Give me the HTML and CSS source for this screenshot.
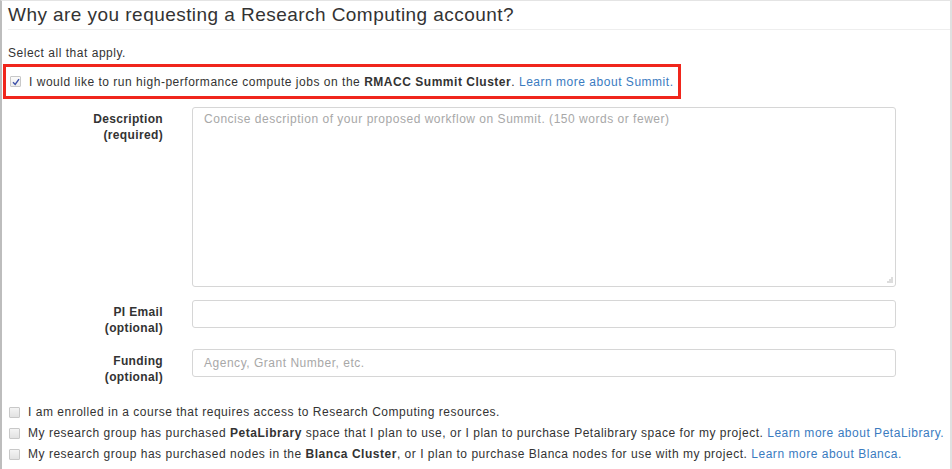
FILE: index.html
```html
<!DOCTYPE html>
<html>
<head>
<meta charset="utf-8">
<link rel="stylesheet" href="styles.css">
</head>
<body>
<div class="panel">
  <h2 class="heading">Why are you requesting a Research Computing account?</h2>
  <p class="hint">Select all that apply.</p>
  <div class="highlight">
    <label class="check"><span class="box checked"><svg width="8" height="8" viewBox="0 0 8 8"><path d="M1 4.2 L3.2 6.4 L7 1.2" fill="none" stroke="#3b4fa8" stroke-width="1.4"/></svg></span><span class="txt">I would like to run high-performance compute jobs on the <b>RMACC Summit Cluster</b>. <a class="link">Learn more about Summit.</a></span></label>
  </div>
  <div class="form">
    <div class="label">Description<br>(required)</div>
    <div class="field textarea"><span class="ph">Concise description of your proposed workflow on Summit. (150 words or fewer)</span><svg class="grip" width="8" height="8" viewBox="0 0 8 8"><path d="M7 1 V7 M5 3 V7 M3 5 V7" stroke="#bbb" stroke-width="1"/></svg></div>
    <div class="label">PI Email<br>(optional)</div>
    <div class="field input"></div>
    <div class="label">Funding<br>(optional)</div>
    <div class="field input"><span class="ph">Agency, Grant Number, etc.</span></div>
  </div>
  <div class="checks">
    <label class="check"><span class="box"></span><span class="txt">I am enrolled in a course that requires access to Research Computing resources.</span></label>
    <label class="check"><span class="box"></span><span class="txt">My research group has purchased <b>PetaLibrary</b> space that I plan to use, or I plan to purchase Petalibrary space for my project. <a class="link">Learn more about PetaLibrary.</a></span></label>
    <label class="check"><span class="box"></span><span class="txt">My research group has purchased nodes in the <b>Blanca Cluster</b>, or I plan to purchase Blanca nodes for use with my project. <a class="link">Learn more about Blanca.</a></span></label>
  </div>
</div>
</body>
</html>
```
FILE: styles.css
```css
html, body {
  margin: 0;
  padding: 0;
  background: #fff;
}
body {
  font-family: "Liberation Sans", Arial, sans-serif;
  color: #333;
  font-size: 12px;
  letter-spacing: 0.52px;
}
.panel {
  width: 948px;
  height: 468px;
  border-top: 1px solid #e4e4e4;
  border-left: 2px solid #bdbdbd;
  border-right: 2px solid #e0e0e0;
  box-sizing: content-box;
  overflow: hidden;
}
.heading {
  margin: 0 0 0 6px;
  padding: 4px 0 5px 0;
  font-size: 19px;
  line-height: 19px;
  letter-spacing: 0.45px;
  font-weight: normal;
  color: #333;
  border-bottom: 1px solid #eeeeee;
}
.hint {
  margin: 16px 0 0 6px;
  line-height: 14px;
}
.highlight {
  margin: 4px 0 0 1px;
  width: 668px;
  height: 29px;
  border: 3px solid #f0261c;
  display: flex;
  align-items: center;
  padding-left: 4px;
  box-sizing: content-box;
}
.check {
  display: flex;
  align-items: center;
  white-space: nowrap;
  line-height: 14px;
}
.box {
  width: 9px;
  height: 9px;
  border: 1px solid #c8c8c8;
  background: linear-gradient(#f4f4f4, #e2e2e2);
  border-radius: 1px;
  margin-right: 8px;
  flex: none;
  display: flex;
  align-items: center;
  justify-content: center;
}
.box.checked {
  background: linear-gradient(#fbfbfb, #ececec);
}
b {
  font-weight: bold;
  color: #333;
}
.link {
  color: #3a7bbf;
}
.form {
  display: grid;
  grid-template-columns: 161px 704px;
  column-gap: 29px;
  row-gap: 13px;
  margin-top: 8px;
}
.label {
  text-align: right;
  font-weight: bold;
  line-height: 16px;
  padding-top: 4px;
  letter-spacing: 0.35px;
}
.field {
  border: 1px solid #d6d6d6;
  border-radius: 3px;
  box-sizing: border-box;
  position: relative;
  padding: 4px 11px;
  line-height: 14px;
}
.textarea {
  height: 180px;
}
.input {
  height: 28px;
  padding-top: 6px;
}
.ph {
  color: #a8a8a8;
}
.grip {
  position: absolute;
  right: 2px;
  bottom: 2px;
}
.checks {
  margin: 20px 0 0 7px;
  display: flex;
  flex-direction: column;
  gap: 7px;
}
```
